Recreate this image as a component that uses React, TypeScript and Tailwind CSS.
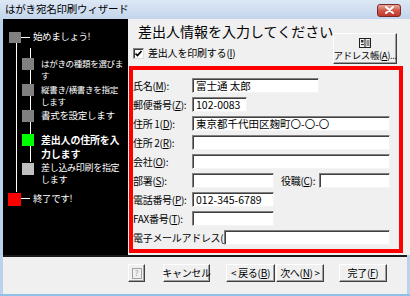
import React from "react";

const btn =
  "h-[18px] flex items-center justify-center whitespace-nowrap text-[10px] tracking-[-0.3px] leading-none text-black bg-[#f0f0f0] border border-t-white border-l-white border-r-[#404040] border-b-[#404040] shadow-[inset_-1px_-1px_0_#a0a0a0]";

function Field({ w, value }: { w: string; value?: string }) {
  return (
    <div
      className={`${w} shrink-0 h-[15px] bg-white border border-t-[#808080] border-l-[#808080] border-r-[#f4f4f4] border-b-[#f4f4f4] shadow-[inset_1px_1px_0_#404040] pl-[3px] text-[10.5px] leading-[13px] text-black whitespace-nowrap overflow-hidden`}
    >
      {value}
    </div>
  );
}

function Label({ w, children }: { w: string; children: React.ReactNode }) {
  return (
    <div className={`${w} shrink-0 h-[15px] flex items-center text-[10px] tracking-[-0.3px] text-black whitespace-nowrap`}>
      {children}
    </div>
  );
}

function Row({ children }: { children: React.ReactNode }) {
  return <div className="h-[19px] flex items-start">{children}</div>;
}

function Step({
  color,
  text,
  lines,
}: {
  color: string;
  text: string;
  lines: string[];
}) {
  return (
    <div className="flex items-start">
      <div className={`shrink-0 ml-[19px] mt-[1px] w-[12px] h-[12px] ${color}`} />
      <div className={`ml-[7px] text-white whitespace-nowrap ${text}`}>
        {lines.map((l) => (
          <div key={l}>{l}</div>
        ))}
      </div>
    </div>
  );
}

export default function App() {
  return (
    <div className="w-[410px] h-[296px] overflow-hidden bg-[#bcd1ea] flex flex-col font-['Noto_Sans_CJK_JP','Noto_Sans',sans-serif]">
      {/* title bar */}
      <div className="h-[19px] flex items-center justify-between pl-[5px] pr-[9px] bg-gradient-to-b from-[#dde8f5] to-[#c3d5ec]">
        <span className="text-[10.5px] tracking-[-0.2px] text-black leading-none">はがき宛名印刷ウィザード</span>
        <div className="w-[24px] h-[13px] mt-[1px] rounded-[3px] border border-[#7a2a24] bg-gradient-to-b from-[#e9a99c] via-[#d0584a] to-[#c1382b] flex items-center justify-center">
          <svg width="9" height="8" viewBox="0 0 9 8">
            <path d="M1 1 L8 7 M8 1 L1 7" stroke="white" strokeWidth="2" strokeLinecap="round" />
          </svg>
        </div>
      </div>

      <div className="flex-1 flex flex-col mx-[3px]">
        <div className="h-[238px] flex border-b-2 border-[#1a1a1a]">
          {/* left step list */}
          <div className="relative w-[125px] shrink-0 overflow-hidden bg-black flex flex-col">
            <svg className="absolute left-0 top-0" width="125" height="236">
              <line x1="13.5" y1="24" x2="13.5" y2="173" stroke="white" />
              <line x1="18" y1="18.5" x2="27" y2="18.5" stroke="white" />
              <line x1="27.5" y1="29" x2="27.5" y2="143" stroke="white" />
              <line x1="18" y1="179.5" x2="27" y2="179.5" stroke="white" />
            </svg>
            <div className="relative mt-[12px] h-[12px] flex items-center">
              <div className="shrink-0 ml-[6px] w-[12px] h-[11px] bg-[#808080]" />
              <span className="ml-[12px] text-[9.5px] tracking-[-0.4px] leading-none text-white whitespace-nowrap">始めましょう!</span>
            </div>
            <div className="relative mt-[14px] flex flex-col">
              <Step color="bg-[#808080]" text="text-[8.5px] leading-[12px] tracking-[-0.3px]" lines={["はがきの種類を選びま", "す"]} />
              <div className="mt-[2px]">
                <Step color="bg-[#808080]" text="text-[8.5px] leading-[12px] tracking-[-0.3px]" lines={["縦書き/横書きを指定", "します"]} />
              </div>
              <div className="mt-[2px]">
                <Step color="bg-[#808080]" text="text-[9.5px] leading-[12px] tracking-[-0.3px]" lines={["書式を設定します"]} />
              </div>
              <div className="mt-[11px]">
                <Step color="bg-[#00ff00]" text="text-[10px] leading-[14px] font-bold tracking-[-0.2px]" lines={["差出人の住所を入", "力します"]} />
              </div>
              <div className="mt-[1px]">
                <Step color="bg-[#c0c0c0]" text="text-[9px] leading-[12px] tracking-[-0.3px]" lines={["差し込み印刷を指定", "します"]} />
              </div>
            </div>
            <div className="relative mt-[6px] h-[14px] flex items-center">
              <div className="shrink-0 ml-[5px] w-[13px] h-[13px] bg-[#ff0000]" />
              <span className="ml-[12px] text-[9.5px] tracking-[-0.4px] leading-none text-white whitespace-nowrap">終了です!</span>
            </div>
          </div>

          {/* right content */}
          <div className="flex-1 bg-[#f0f0f0] border-r border-[#222] flex flex-col">
            <div className="h-[47px] flex justify-between">
              <div className="flex flex-col pl-[5px]">
                <div className="mt-[3px] ml-[5px] text-[14px] leading-[18px] text-black whitespace-nowrap">
                  差出人情報を入力してください
                </div>
                <div className="mt-[7px] h-[12px] flex items-center">
                  <div className="shrink-0 w-[11px] h-[11px] bg-white border border-t-[#808080] border-l-[#808080] border-r-[#e0e0e0] border-b-[#e0e0e0] shadow-[inset_1px_1px_0_#404040] flex items-center justify-center">
                    <svg width="7" height="7" viewBox="0 0 7 7">
                      <path d="M0.5 3.5 L2.5 5.5 L6.5 1" stroke="black" strokeWidth="1.6" fill="none" />
                    </svg>
                  </div>
                  <span className="ml-[4px] text-[10px] tracking-[-0.2px] text-black leading-none whitespace-nowrap">
                    差出人を印刷する(<u>I</u>)
                  </span>
                </div>
              </div>
              <div className="shrink-0 mt-[14px] mr-[16px] w-[64px] h-[31px] flex flex-col items-center bg-[#f0f0f0] border border-t-white border-l-white border-r-[#404040] border-b-[#404040] shadow-[inset_-1px_-1px_0_#a0a0a0]">
                <svg className="mt-[4px]" width="12" height="10" viewBox="0 0 12 10">
                  <rect x="0.5" y="0.5" width="11" height="9" fill="#f0f0f0" stroke="#202020" />
                  <line x1="6" y1="0.5" x2="6" y2="9.5" stroke="#202020" />
                  <rect x="2" y="2" width="2.5" height="2.5" fill="#303030" />
                  <line x1="2" y1="6.5" x2="5" y2="6.5" stroke="#303030" />
                  <line x1="7.5" y1="3" x2="10.5" y2="3" stroke="#303030" />
                  <line x1="7.5" y1="5" x2="10.5" y2="5" stroke="#303030" />
                  <line x1="7.5" y1="7" x2="10.5" y2="7" stroke="#303030" />
                </svg>
                <span className="mt-[3px] text-[9.5px] tracking-[-0.4px] leading-none text-black whitespace-nowrap">
                  アドレス帳(<u>A</u>)...
                </span>
              </div>
            </div>

            <div className="ml-[1px] w-[274px] h-[187px] border-4 border-[#ff0000] pt-[8px] flex flex-col">
              <Row>
                <Label w="w-[59px]">氏名(<u>M</u>):</Label>
                <Field w="w-[127px]" value="富士通 太郎" />
              </Row>
              <Row>
                <Label w="w-[59px]">郵便番号(<u>Z</u>):</Label>
                <Field w="w-[55px]" value="102-0083" />
              </Row>
              <Row>
                <Label w="w-[59px]">住所 1(<u>D</u>):</Label>
                <Field w="w-[198px]" value="東京都千代田区麹町〇-〇-〇" />
              </Row>
              <Row>
                <Label w="w-[59px]">住所 2(<u>R</u>):</Label>
                <Field w="w-[198px]" />
              </Row>
              <Row>
                <Label w="w-[59px]">会社(<u>O</u>):</Label>
                <Field w="w-[198px]" />
              </Row>
              <Row>
                <Label w="w-[59px]">部署(<u>S</u>):</Label>
                <Field w="w-[82px]" />
                <div className="ml-[7px]">
                  <Label w="w-[38px]">役職(<u>C</u>):</Label>
                </div>
                <Field w="w-[71px]" />
              </Row>
              <Row>
                <Label w="w-[59px]">電話番号(<u>P</u>):</Label>
                <Field w="w-[82px]" value="012-345-6789" />
              </Row>
              <Row>
                <Label w="w-[59px]">FAX番号(<u>T</u>):</Label>
                <Field w="w-[82px]" />
              </Row>
              <Row>
                <Label w="w-[91px]">電子メールアドレス(<u>E</u>):</Label>
                <Field w="w-[166px]" />
              </Row>
            </div>
          </div>
        </div>

        {/* bottom buttons */}
        <div className="h-[37px] bg-[#f0f0f0] flex items-start justify-end pt-[7px] pr-[20px]">
          <div className={`${btn} w-[17px]`}>
            <div className="w-[10px] h-[11px] border border-[#a0a0a0] flex items-center justify-center text-[8px] leading-none text-[#a0a0a0]">
              ?
            </div>
          </div>
          <div className={`${btn} ml-[18px] w-[47px]`}>キャンセル</div>
          <div className={`${btn} ml-[16px] w-[49px]`}>
            &lt; 戻る(<u>B</u>)
          </div>
          <div className={`${btn} ml-[1px] w-[48px]`}>
            次へ(<u>N</u>) &gt;
          </div>
          <div className={`${btn} ml-[15px] w-[48px]`}>
            完了(<u>F</u>)
          </div>
        </div>
      </div>
      <div className="h-[2px] bg-[#8fc0e6]" />
    </div>
  );
}
